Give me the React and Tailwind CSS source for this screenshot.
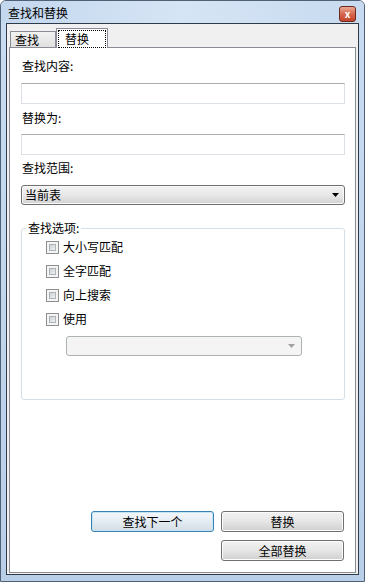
import React from 'react';

const Checkbox = ({ label }) => (
  <div className="flex h-[24px] items-center">
    <div className="h-[13px] w-[13px] border border-[#8e8f8f] bg-[#f4f4f4] p-[2px]">
      <div className="h-full w-full border border-[#aeb3b9] bg-gradient-to-br from-[#cbcfd5] to-[#f1f2f3]" />
    </div>
    <span className="ml-[4px] text-[12px] leading-[14px] text-black">{label}</span>
  </div>
);

const Button = ({ children, focused }) => (
  <button
    className={
      focused
        ? 'flex h-[21px] w-[123px] items-center justify-center rounded-[3px] border border-[#3c7fb1] bg-gradient-to-b from-[#f4f8fb] via-[#e4ecf2] to-[#d4dde4] text-[12px] leading-[14px] text-black shadow-[inset_0_0_0_1px_#c4e5f6]'
        : 'flex h-[21px] w-[123px] items-center justify-center rounded-[3px] border border-[#707070] bg-gradient-to-b from-[#f2f2f2] via-[#e6e6e6] to-[#cfcfcf] text-[12px] leading-[14px] text-black shadow-[inset_0_0_0_1px_#fcfcfc]'
    }
  >
    {children}
  </button>
);

export default function App() {
  return (
    <div className="flex h-[582px] w-[365px] flex-col overflow-hidden rounded-t-[6px] border border-[#4f6275] bg-gradient-to-b from-[#c9dcf1] to-[#b9cfe8] font-['Noto_Sans_CJK_SC',sans-serif]">
      {/* title bar */}
      <div className="flex h-[22px] shrink-0 items-start bg-gradient-to-r from-[#c3d7ee] via-[#d6e5f5] to-[#c7daef]">
        <span className="ml-[7px] mt-[5px] text-[12px] leading-[14px] text-black">查找和替换</span>
        <div className="ml-auto mr-[8px] mt-[5px] flex h-[16px] w-[17px] items-center justify-center rounded-[3px] border border-[#6e2a1f] bg-gradient-to-b from-[#e9a996] via-[#d7664c] to-[#c2442b] text-[10px] font-bold leading-[10px] text-white">
          x
        </div>
      </div>

      {/* client area */}
      <div className="mx-[5px] mb-[6px] flex flex-1 flex-col border border-[#2f3b48] bg-[#f0f0f0] px-[2px] pb-[1px] pt-[4px]">
        {/* tabs */}
        <div className="relative z-10 -mb-px ml-[1px] flex h-[20px]">
          <div className="mb-[1px] mt-[3px] h-[16px] w-[46px] border border-b-0 border-[#898c95] bg-gradient-to-b from-[#f2f2f2] to-[#e0e0e0] pl-[4px] text-[12px] leading-[15px] text-black">
            查找
          </div>
          <div className="h-[20px] w-[52px] border border-b-0 border-[#898c95] bg-white pl-[1px] pt-[1px]">
            <div className="flex h-[18px] w-[48px] items-center border border-dotted border-black pl-[6px] text-[12px] leading-[14px] text-black">
              替换
            </div>
          </div>
        </div>

        {/* panel */}
        <div className="flex flex-1 flex-col border border-[#898c95] bg-white pl-[11px] pr-[10px]">
          <div className="mt-[11px] h-[14px] pl-[1px] text-[12px] leading-[14px] text-black">查找内容:</div>
          <div className="mt-[10px] h-[21px] border border-[#dbdfe6] border-t-[#abadb3] bg-white" />

          <div className="mt-[7px] h-[14px] pl-[1px] text-[12px] leading-[14px] text-black">替换为:</div>
          <div className="mt-[9px] h-[21px] border border-[#dbdfe6] border-t-[#abadb3] bg-white" />

          <div className="mt-[6px] h-[14px] pl-[1px] text-[12px] leading-[14px] text-black">查找范围:</div>
          <div className="mt-[10px] flex h-[20px] items-center rounded-[3px] border border-[#707070] bg-gradient-to-b from-[#f2f2f2] via-[#e8e8e8] to-[#d2d2d2] pl-[3px] pr-[5px] shadow-[inset_0_0_0_1px_#fafafa]">
            <span className="text-[12px] leading-[14px] text-black">当前表</span>
            <svg className="ml-auto" width="7" height="4" viewBox="0 0 7 4">
              <path d="M0 0h7L3.5 4z" fill="#000" />
            </svg>
          </div>

          <fieldset className="mt-[16px] h-[179px] rounded-[3px] border border-[#d5dfe5]">
            <legend className="ml-[4px] px-[2px] text-[12px] leading-[14px] text-black">查找选项:</legend>
            <div className="pl-[24px]">
              <Checkbox label="大小写匹配" />
              <Checkbox label="全字匹配" />
              <Checkbox label="向上搜索" />
              <Checkbox label="使用" />
              <div className="ml-[20px] mt-[5px] flex h-[20px] w-[236px] items-center rounded-[3px] border border-[#adb2b5] bg-[#f4f4f4] pr-[6px]">
                <svg className="ml-auto" width="7" height="4" viewBox="0 0 7 4">
                  <path d="M0 0h7L3.5 4z" fill="#a0a0a0" />
                </svg>
              </div>
            </div>
          </fieldset>

          <div className="flex-1" />

          <div className="mb-[11px] mr-[1px] flex flex-col items-end gap-[8px]">
            <div className="flex gap-[7px]">
              <Button focused>查找下一个</Button>
              <Button>替换</Button>
            </div>
            <Button>全部替换</Button>
          </div>
        </div>
      </div>
    </div>
  );
}
